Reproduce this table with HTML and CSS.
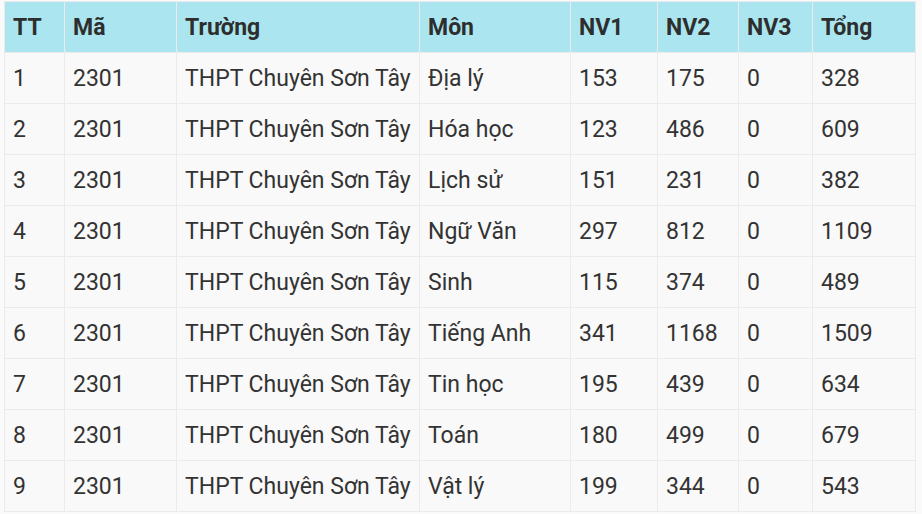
FILE: index.html
```html
<!DOCTYPE html>
<html>
<head>
<meta charset="utf-8">
<link rel="stylesheet" href="styles.css">
</head>
<body>
<table class="grid">
  <colgroup>
    <col class="c-tt"><col class="c-ma"><col class="c-truong"><col class="c-mon">
    <col class="c-nv1"><col class="c-nv2"><col class="c-nv3"><col class="c-tong">
  </colgroup>
  <thead>
    <tr><th>TT</th><th>Mã</th><th>Trường</th><th>Môn</th><th>NV1</th><th>NV2</th><th>NV3</th><th>Tổng</th></tr>
  </thead>
  <tbody>
    <tr><td>1</td><td>2301</td><td>THPT Chuyên Sơn Tây</td><td>Địa lý</td><td>153</td><td>175</td><td>0</td><td>328</td></tr>
    <tr><td>2</td><td>2301</td><td>THPT Chuyên Sơn Tây</td><td>Hóa học</td><td>123</td><td>486</td><td>0</td><td>609</td></tr>
    <tr><td>3</td><td>2301</td><td>THPT Chuyên Sơn Tây</td><td>Lịch sử</td><td>151</td><td>231</td><td>0</td><td>382</td></tr>
    <tr><td>4</td><td>2301</td><td>THPT Chuyên Sơn Tây</td><td>Ngữ Văn</td><td>297</td><td>812</td><td>0</td><td>1109</td></tr>
    <tr><td>5</td><td>2301</td><td>THPT Chuyên Sơn Tây</td><td>Sinh</td><td>115</td><td>374</td><td>0</td><td>489</td></tr>
    <tr><td>6</td><td>2301</td><td>THPT Chuyên Sơn Tây</td><td>Tiếng Anh</td><td>341</td><td>1168</td><td>0</td><td>1509</td></tr>
    <tr><td>7</td><td>2301</td><td>THPT Chuyên Sơn Tây</td><td>Tin học</td><td>195</td><td>439</td><td>0</td><td>634</td></tr>
    <tr><td>8</td><td>2301</td><td>THPT Chuyên Sơn Tây</td><td>Toán</td><td>180</td><td>499</td><td>0</td><td>679</td></tr>
    <tr><td>9</td><td>2301</td><td>THPT Chuyên Sơn Tây</td><td>Vật lý</td><td>199</td><td>344</td><td>0</td><td>543</td></tr>
  </tbody>
</table>
</body>
</html>
```

FILE: styles.css
```css
html, body {
  margin: 0;
  background: #fafafa;
}
body {
  padding: 1px 0 0 4px;
  font-family: Roboto, "Liberation Sans", sans-serif;
  color: #333333;
}
.grid {
  border-collapse: collapse;
  table-layout: fixed;
  width: 911px;
  font-size: 23px;
  background: #f9f9f9;
}
.c-tt { width: 60px; }
.c-ma { width: 112px; }
.c-truong { width: 243px; }
.c-mon { width: 151px; }
.c-nv1 { width: 87px; }
.c-nv2 { width: 81px; }
.c-nv3 { width: 74px; }
.c-tong { width: 103px; }
.grid th, .grid td {
  border: 1px solid #ebebeb;
  height: 51px;
  padding: 0 0 0 8px;
  text-align: left;
  vertical-align: middle;
  white-space: nowrap;
  box-sizing: border-box;
}
.grid th {
  background: #abe6f0;
  font-weight: 700;
  color: #2e2e2e;
}
```
